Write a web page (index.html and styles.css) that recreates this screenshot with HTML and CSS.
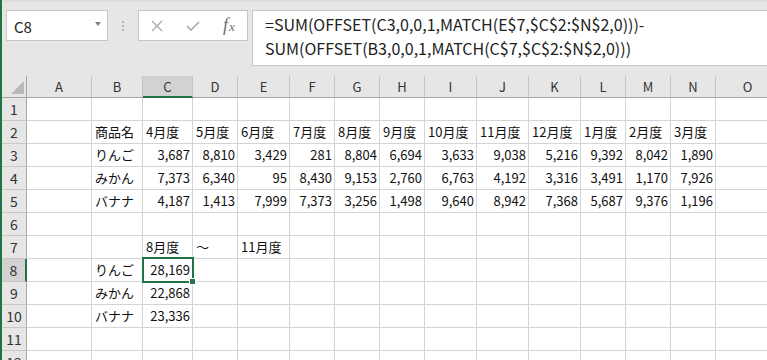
FILE: index.html
```html
<!DOCTYPE html>
<html>
<head>
  <meta charset="UTF-8">
  <title>OFFSET + MATCH</title>
  <link rel="stylesheet" href="styles.css">
</head>
<body>
  <div class="app">
    <div class="toolbar">
      <div class="namebox"><span>C8</span><span class="caret"></span></div>
      <div class="grip"><i></i><i></i><i></i></div>
      <div class="fxbox">
        <span class="btn">
          <svg width="12" height="12" viewBox="0 0 12 12"><path d="M1 1L11 11M11 1L1 11" stroke="#a8a8a8" stroke-width="1.3" fill="none"/></svg>
        </span>
        <span class="btn">
          <svg width="14" height="10" viewBox="0 0 14 10"><path d="M1 5L5 9L13 1" stroke="#a8a8a8" stroke-width="1.6" fill="none"/></svg>
        </span>
        <span class="btn fx">f<span class="x">x</span></span>
      </div>
      <div class="formula">=SUM(OFFSET(C3,0,0,1,MATCH(E$7,$C$2:$N$2,0)))-<br>SUM(OFFSET(B3,0,0,1,MATCH(C$7,$C$2:$N$2,0)))</div>
    </div>

    <div class="sheet">
      <div class="row head">
        <div class="corner"><span class="tri"></span></div>
        <div>A</div><div>B</div><div class="on">C</div><div>D</div><div>E</div><div>F</div><div>G</div>
        <div>H</div><div>I</div><div>J</div><div>K</div><div>L</div><div>M</div><div>N</div><div>O</div>
      </div>
      <div class="row">
        <div class="rh">1</div>
        <div></div><div></div><div></div><div></div><div></div><div></div><div></div>
        <div></div><div></div><div></div><div></div><div></div><div></div><div></div><div></div>
      </div>
      <div class="row">
        <div class="rh">2</div>
        <div></div><div>商品名</div><div>4月度</div><div>5月度</div><div>6月度</div><div>7月度</div><div>8月度</div>
        <div>9月度</div><div>10月度</div><div>11月度</div><div>12月度</div><div>1月度</div><div>2月度</div><div>3月度</div><div></div>
      </div>
      <div class="row">
        <div class="rh">3</div>
        <div></div><div>りんご</div><div class="n">3,687</div><div class="n">8,810</div><div class="n">3,429</div><div class="n">281</div><div class="n">8,804</div>
        <div class="n">6,694</div><div class="n">3,633</div><div class="n">9,038</div><div class="n">5,216</div><div class="n">9,392</div><div class="n">8,042</div><div class="n">1,890</div><div></div>
      </div>
      <div class="row">
        <div class="rh">4</div>
        <div></div><div>みかん</div><div class="n">7,373</div><div class="n">6,340</div><div class="n">95</div><div class="n">8,430</div><div class="n">9,153</div>
        <div class="n">2,760</div><div class="n">6,763</div><div class="n">4,192</div><div class="n">3,316</div><div class="n">3,491</div><div class="n">1,170</div><div class="n">7,926</div><div></div>
      </div>
      <div class="row">
        <div class="rh">5</div>
        <div></div><div>バナナ</div><div class="n">4,187</div><div class="n">1,413</div><div class="n">7,999</div><div class="n">7,373</div><div class="n">3,256</div>
        <div class="n">1,498</div><div class="n">9,640</div><div class="n">8,942</div><div class="n">7,368</div><div class="n">5,687</div><div class="n">9,376</div><div class="n">1,196</div><div></div>
      </div>
      <div class="row">
        <div class="rh">6</div>
        <div></div><div></div><div></div><div></div><div></div><div></div><div></div>
        <div></div><div></div><div></div><div></div><div></div><div></div><div></div><div></div>
      </div>
      <div class="row">
        <div class="rh">7</div>
        <div></div><div></div><div>8月度</div><div>〜</div><div>11月度</div><div></div><div></div>
        <div></div><div></div><div></div><div></div><div></div><div></div><div></div><div></div>
      </div>
      <div class="row">
        <div class="rh on">8</div>
        <div></div><div>りんご</div><div class="n sel">28,169<span class="handle"></span></div><div></div><div></div><div></div><div></div>
        <div></div><div></div><div></div><div></div><div></div><div></div><div></div><div></div>
      </div>
      <div class="row">
        <div class="rh">9</div>
        <div></div><div>みかん</div><div class="n">22,868</div><div></div><div></div><div></div><div></div>
        <div></div><div></div><div></div><div></div><div></div><div></div><div></div><div></div>
      </div>
      <div class="row">
        <div class="rh">10</div>
        <div></div><div>バナナ</div><div class="n">23,336</div><div></div><div></div><div></div><div></div>
        <div></div><div></div><div></div><div></div><div></div><div></div><div></div><div></div>
      </div>
      <div class="row">
        <div class="rh">11</div>
        <div></div><div></div><div></div><div></div><div></div><div></div><div></div>
        <div></div><div></div><div></div><div></div><div></div><div></div><div></div><div></div>
      </div>
      <div class="row">
        <div class="rh">12</div>
        <div></div><div></div><div></div><div></div><div></div><div></div><div></div>
        <div></div><div></div><div></div><div></div><div></div><div></div><div></div><div></div>
      </div>
    </div>
  </div>
</body>
</html>
```

FILE: styles.css
```css
body { margin: 0; background: #fff; font-family: "Noto Sans CJK JP", sans-serif; color: #000; overflow: hidden; }
.app { border-left: 2px solid #217346; height: 360px; overflow: hidden; }

/* toolbar / formula bar */
.toolbar { display: flex; align-items: flex-start; height: 76px; box-sizing: border-box; padding: 8px 0 0 4px; background: #e6e6e6; border-top: 2px solid #dcdcdc; }
.namebox { display: flex; justify-content: space-between; align-items: center; width: 102px; height: 31px; box-sizing: border-box; border: 1px solid #c6c6c6; background: #fff; padding: 2px 6px 0 7px; font-size: 15px; color: #222; }
.caret { width: 0; height: 0; border-left: 3.5px solid transparent; border-right: 3.5px solid transparent; border-top: 4px solid #808080; margin-top: -6px; }
.grip { width: 30px; height: 31px; display: flex; flex-direction: column; align-items: center; justify-content: center; gap: 2px; }
.grip i { display: block; width: 2px; height: 2px; background: #b4b4b4; }
.fxbox { display: flex; width: 110px; height: 31px; box-sizing: border-box; border: 1px solid #c6c6c6; background: #fff; }
.btn { width: 36px; display: flex; align-items: center; justify-content: center; }
.fx { font-family: "Liberation Serif", serif; font-style: italic; font-size: 18px; color: #707070; padding-bottom: 1px; }
.fx .x { font-size: 13px; margin-left: 1px; padding-top: 4px; }
.formula { flex: 1; margin-left: 4px; margin-right: -4px; height: 56px; box-sizing: border-box; border: 1px solid #c6c6c6; background: #fff; padding: 1px 0 0 12px; font-size: 16px; line-height: 24px; white-space: nowrap; color: #222; }

/* sheet grid */
.row { display: grid; grid-template-columns: 25px 65px 51px 50px 45px 52px 45px 45px 45px 52px 52px 52px 45px 45px 45px 64px; height: 23px; }
.row > div { box-sizing: border-box; border-right: 1px solid #d4d4d4; border-bottom: 1px solid #d4d4d4; padding: 0 2px 0 3px; font-size: 13px; line-height: 22px; white-space: nowrap; overflow: hidden; color: #111; }
.row .n { text-align: right; }

.head { height: 22px; background: #e6e6e6; }
.head > div { border-right-color: #c4c4c4; border-bottom-color: #a6a6a6; text-align: center; color: #333; padding: 0; line-height: 21px; }
.head .on { background: #d2d2d2; border-bottom: 2px solid #217346; }
.corner { display: flex; justify-content: flex-end; align-items: flex-end; padding: 0 2px 3px 0 !important; border-right-color: #a6a6a6 !important; }
.tri { width: 0; height: 0; border-left: 13px solid transparent; border-bottom: 13px solid #b9b9b9; }

.row .rh { background: #e6e6e6; border-right-color: #a6a6a6; border-bottom-color: #c8c8c8; text-align: center; color: #333; padding: 0; font-size: 14px; }
.row .rh.on { background: #d2d2d2; border-right: 2px solid #217346; }

.row .sel { position: relative; overflow: visible; }
.sel::after { content: ""; position: absolute; left: -1px; top: -2px; width: 52px; height: 26px; box-sizing: border-box; border: 2px solid #217346; z-index: 1; }
.handle { position: absolute; left: 46px; top: 19px; width: 5px; height: 5px; background: #217346; border: 1px solid #fff; z-index: 2; }
```
